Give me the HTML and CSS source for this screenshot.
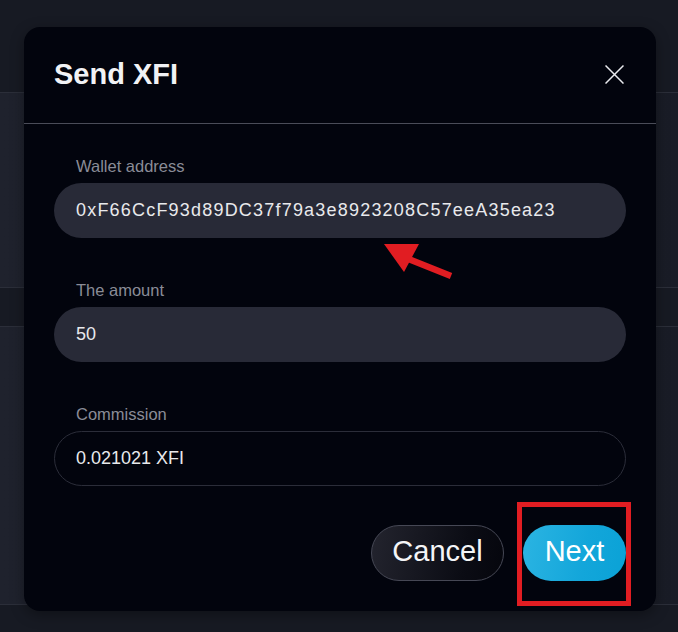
FILE: index.html
```html
<!DOCTYPE html>
<html lang="en">
<head>
<meta charset="utf-8">
<title>Send XFI</title>
<link rel="stylesheet" href="styles.css">
</head>
<body>
<div class="page">
  <div class="band band-dark band-top"></div>
  <div class="band band-light band-a"></div>
  <div class="band band-dark band-b"></div>
  <div class="band band-light band-c"></div>
  <div class="band band-dark band-d"></div>

  <div class="modal">
    <div class="modal-head">
      <h1 class="title">Send XFI</h1>
      <button class="close" aria-label="Close">
        <svg width="19" height="19" viewBox="0 0 19 19"><path d="M0.5 0.5 L18.5 18.5 M18.5 0.5 L0.5 18.5" stroke="#e9eaee" stroke-width="1.5" fill="none"/></svg>
      </button>
    </div>
    <div class="modal-body">
      <div class="field">
        <div class="label">Wallet address</div>
        <div class="input filled address">0xF66CcF93d89DC37f79a3e8923208C57eeA35ea23</div>
      </div>
      <div class="field">
        <div class="label">The amount</div>
        <div class="input filled">50</div>
      </div>
      <div class="field">
        <div class="label">Commission</div>
        <div class="input outline">0.021021 XFI</div>
      </div>
      <div class="actions">
        <button class="btn btn-cancel">Cancel</button>
        <button class="btn btn-next">Next</button>
      </div>
    </div>
  </div>

  <svg class="arrow" width="80" height="50" viewBox="380 238 80 50">
    <line x1="406" y1="258" x2="451" y2="276" stroke="#e11d22" stroke-width="6.5"/>
    <polygon points="384,244 419,244 404,272" fill="#e11d22"/>
  </svg>
  <div class="highlight"></div>
</div>
</body>
</html>
```

FILE: styles.css
```css
* { box-sizing: border-box; }
html, body { margin: 0; padding: 0; }
body {
  background: #171a23;
  font-family: "Liberation Sans", Arial, sans-serif;
  width: 678px;
  height: 632px;
  overflow: hidden;
}
.page {
  position: relative;
  width: 678px;
  height: 632px;
  display: flex;
  flex-direction: column;
}
.band { border-bottom: 1px solid #2b2e39; }
.band-dark { background: #171a23; }
.band-light { background: linear-gradient(90deg, #1f222d 0%, #1d202b 50%, #191c26 100%); }
.band-top { height: 93px; }
.band-a { height: 195px; }
.band-b { height: 39px; }
.band-c { height: 278px; }
.band-d { flex: 1; border-bottom: none; }

.modal {
  position: absolute;
  left: 24px;
  top: 27px;
  width: 632px;
  height: 584px;
  background: #02040d;
  border-radius: 16px;
  box-shadow: 0 4px 14px rgba(0, 0, 0, 0.35);
  display: flex;
  flex-direction: column;
}
.modal-head {
  height: 98px;
  border-bottom: 1px solid #4a4c58;
  display: flex;
  align-items: center;
  justify-content: space-between;
  padding: 0 32px 1px 30px;
}
.title {
  margin: 0;
  color: #f1f2f5;
  font-size: 29px;
  font-weight: 700;
  letter-spacing: 0;
}
.close {
  background: none;
  border: none;
  padding: 0;
  width: 19px;
  height: 19px;
  display: flex;
}
.modal-body {
  padding: 32px 30px 30px;
  display: flex;
  flex-direction: column;
  gap: 42px;
}
.field {
  display: flex;
  flex-direction: column;
  gap: 6px;
}
.label {
  color: #8a8c97;
  font-size: 16.5px;
  line-height: 20px;
  padding: 0 0 1px 22px;
}
.input {
  height: 55px;
  border-radius: 28px;
  display: flex;
  align-items: center;
  padding: 0 22px;
  color: #e8e9ec;
  font-size: 18px;
}
.input.filled { background: #282a37; }
.input.outline { border: 1px solid #2b2d39; padding-left: 21px; }
.address { letter-spacing: 1.2px; }

.actions {
  display: flex;
  justify-content: flex-end;
  gap: 19px;
  margin-top: -3px;
}
.btn {
  height: 56px;
  border-radius: 28px;
  font-family: "Liberation Sans", Arial, sans-serif;
  font-size: 29px;
  color: #f4f5f7;
  padding: 0 20px 3px;
  display: flex;
  align-items: center;
  justify-content: center;
}
.btn-cancel {
  width: 133px;
  border: 1px solid #464855;
  background: linear-gradient(100deg, #23242e 0%, #0b0c14 70%, #05060d 100%);
}
.btn-next {
  width: 103px;
  border: none;
  background: linear-gradient(100deg, #2bb4e2 0%, #13a6da 60%, #0aa2d6 100%);
  color: #ffffff;
}

.arrow {
  position: absolute;
  left: 380px;
  top: 238px;
}
.highlight {
  position: absolute;
  left: 517px;
  top: 502px;
  width: 114px;
  height: 104px;
  border: 5px solid #e11d22;
}
```
